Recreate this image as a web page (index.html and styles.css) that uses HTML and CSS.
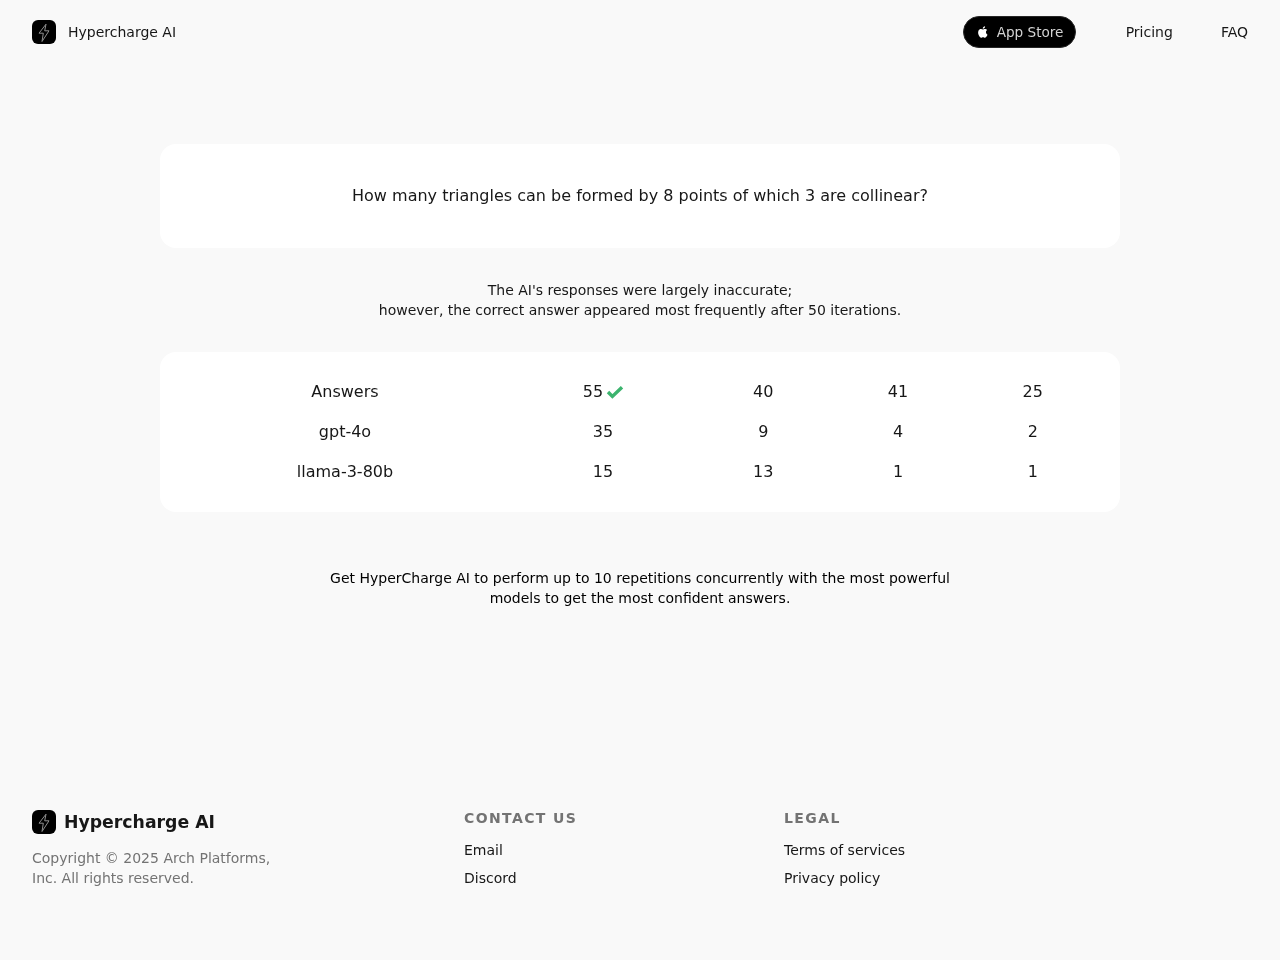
FILE: index.html
```html
<!DOCTYPE html>
<html lang="en">
<head>
<meta charset="utf-8">
<title>Hypercharge AI</title>
<link rel="stylesheet" href="styles.css">
</head>
<body>
<header class="header">
  <a class="brand" href="#">
    <span class="logo"><svg viewBox="0 0 24 24" width="24" height="24"><path d="M14 4.2 7 13.2h4.3L10 21.5l7-10.7h-4.3z" fill="none" stroke="#909090" stroke-width="1" stroke-linejoin="round"/></svg></span>
    <span>Hypercharge AI</span>
  </a>
  <nav class="nav">
    <a class="store" href="#"><svg viewBox="0 0 24 24" width="14" height="14"><path fill="#fff" d="M17.05 12.54c-.03-2.5 2.04-3.7 2.13-3.76-1.16-1.7-2.97-1.93-3.61-1.96-1.54-.16-3 .9-3.78.9-.78 0-1.98-.88-3.26-.86-1.68.03-3.22.98-4.09 2.48-1.74 3.02-.44 7.5 1.25 9.95.83 1.2 1.82 2.55 3.12 2.5 1.25-.05 1.73-.81 3.24-.81 1.51 0 1.94.81 3.27.79 1.35-.03 2.2-1.22 3.02-2.43.95-1.39 1.34-2.74 1.37-2.81-.03-.01-2.62-1-2.66-3.99zM14.56 5.2c.69-.84 1.16-2 1.03-3.16-1 .04-2.2.66-2.92 1.5-.64.74-1.2 1.93-1.05 3.06 1.11.09 2.25-.57 2.94-1.4z"/></svg><span>App Store</span></a>
    <a class="link" href="#">Pricing</a>
    <a class="link" href="#">FAQ</a>
  </nav>
</header>
<main class="main">
  <section class="card question">How many triangles can be formed by 8 points of which 3 are collinear?</section>
  <p class="note">The AI's responses were largely inaccurate;<br>however, the correct answer appeared most frequently after 50 iterations.</p>
  <section class="card results">
    <div class="row">
      <div>Answers</div>
      <div class="best">55<svg class="check" viewBox="0 0 18 14" width="18" height="14"><path d="M2 7 6.4 11.4 16 2.2" fill="none" stroke="#3cb46e" stroke-width="3.4"/></svg></div>
      <div>40</div><div>41</div><div>25</div>
    </div>
    <div class="row"><div>gpt-4o</div><div>35</div><div>9</div><div>4</div><div>2</div></div>
    <div class="row"><div>llama-3-80b</div><div>15</div><div>13</div><div>1</div><div>1</div></div>
  </section>
  <p class="cta">Get HyperCharge AI to perform up to 10 repetitions concurrently with the most powerful models to get the most confident answers.</p>
</main>
<footer class="footer">
  <div class="about">
    <div class="foot-brand">
      <span class="logo"><svg viewBox="0 0 24 24" width="24" height="24"><path d="M14 4.2 7 13.2h4.3L10 21.5l7-10.7h-4.3z" fill="none" stroke="#909090" stroke-width="1" stroke-linejoin="round"/></svg></span>
      <span>Hypercharge AI</span>
    </div>
    <p class="copy">Copyright © 2025 Arch Platforms, Inc. All rights reserved.</p>
  </div>
  <div class="col">
    <h2>CONTACT US</h2>
    <a href="#">Email</a>
    <a href="#">Discord</a>
  </div>
  <div class="col">
    <h2>LEGAL</h2>
    <a href="#">Terms of services</a>
    <a href="#">Privacy policy</a>
  </div>
</footer>
</body>
</html>
```
FILE: styles.css
```css
* { box-sizing: border-box; }
html, body { margin: 0; padding: 0; }
body {
  width: 1280px;
  height: 960px;
  overflow: hidden;
  background: #f9f9f9;
  color: #171717;
  font-family: "DejaVu Sans", sans-serif;
  font-size: 14px;
  line-height: 20px;
  display: flex;
  flex-direction: column;
}
a { color: inherit; text-decoration: none; }
.header, .main, .footer { will-change: transform; }
.header {
  height: 64px;
  padding: 0 32px;
  display: flex;
  align-items: center;
  justify-content: space-between;
}
.brand { display: flex; align-items: center; gap: 12px; }
.logo {
  width: 24px;
  height: 24px;
  border-radius: 6px;
  background: #000;
  display: block;
  flex: none;
}
.logo svg { display: block; }
.nav { display: flex; align-items: center; }
.store {
  width: 113.5px;
  height: 32px;
  margin-right: 49.5px;
  padding-left: 12px;
  border: 1px solid #262626;
  border-radius: 16px;
  background: #000;
  color: #d4d4d4;
  font-size: 13.6px;
  display: flex;
  align-items: center;
  gap: 7px;
}
.store svg { display: block; }
.link { margin-right: 48px; }
.link:last-child { margin-right: 0; }
.main {
  flex: 1;
  padding-top: 80px;
  display: flex;
  flex-direction: column;
  align-items: center;
}
.card {
  width: 960px;
  background: #fff;
  border-radius: 16px;
}
.question {
  height: 104px;
  display: flex;
  align-items: center;
  justify-content: center;
  font-size: 16px;
  line-height: 24px;
}
.note {
  margin: 32px 0;
  text-align: center;
}
.results {
  padding: 20px;
  font-size: 16px;
  line-height: 24px;
}
.row {
  height: 40px;
  display: grid;
  grid-template-columns: 330px 186px 134.5px 135px 134.5px;
  align-items: center;
  text-align: center;
}
.best {
  display: flex;
  align-items: center;
  justify-content: center;
  gap: 3px;
  padding-left: 1px;
}
.best .check { display: block; }
.cta {
  width: 640px;
  margin: 56px 0 0;
  text-align: center;
  color: #000;
}
.footer {
  height: 184px;
  padding: 32px 32px 0;
  display: flex;
}
.about { width: 432px; }
.foot-brand {
  display: flex;
  align-items: center;
  gap: 8px;
  height: 24px;
  font-size: 17.3px;
  font-weight: 700;
  margin-top: 2px;
}
.copy {
  width: 250px;
  margin: 14px 0 0;
  color: #737373;
}
.col { width: 320px; display: flex; flex-direction: column; align-items: flex-start; }
.col h2 {
  margin: 0 0 12px;
  font-size: 14px;
  line-height: 20px;
  font-weight: 700;
  letter-spacing: 1.4px;
  color: #737373;
}
.col a { margin-bottom: 8px; }
```
